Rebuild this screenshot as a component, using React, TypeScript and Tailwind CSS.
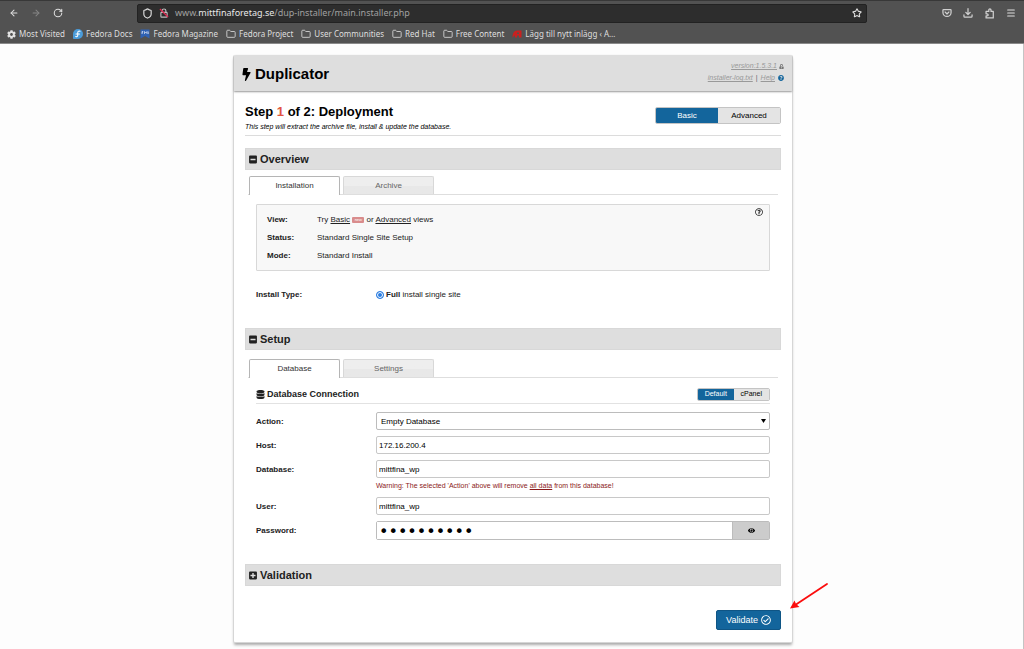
import { useState } from "react";
import type { ReactNode } from "react";
import { ArrowLeft, ArrowRight, Folder, Menu, RotateCw, Shield, Star } from "lucide-react";
import {
  FaBolt,
  FaCog,
  FaDatabase,
  FaEye,
  FaMinusSquare,
  FaPlusSquare,
  FaQuestionCircle,
  FaRegCheckCircle,
  FaRegQuestionCircle,
  FaUnlockAlt,
} from "react-icons/fa";

function InsecureLock() {
  return (
    <svg viewBox="0 0 16 16" className="size-[10px]" fill="none" stroke="#bdbdbd" strokeWidth="1.8">
      <rect x="3" y="7" width="10" height="7.5" rx="1" />
      <path d="M5 7V4.5a3 3 0 0 1 6 0V7" />
      <path d="M1.5 1.5l13 13" stroke="#e22850" strokeWidth="2" />
    </svg>
  );
}

function PocketIcon() {
  return (
    <svg viewBox="0 0 16 16" className="size-[10px]" fill="none" stroke="#d0d0d0" strokeWidth="2" strokeLinecap="round" strokeLinejoin="round">
      <path d="M2.5 2.5h11a1 1 0 0 1 1 1V7a6.5 6.5 0 0 1-13 0V3.5a1 1 0 0 1 1-1z" />
      <path d="M5 6.5l3 3 3-3" />
    </svg>
  );
}

function DownloadIcon() {
  return (
    <svg viewBox="0 0 16 16" className="size-[10px]" fill="none" stroke="#d0d0d0" strokeWidth="2" strokeLinecap="round" strokeLinejoin="round">
      <path d="M8 1v9M4.5 7L8 10.4 11.5 7M1.5 11v2a1.5 1.5 0 0 0 1.5 1.5h10a1.5 1.5 0 0 0 1.5-1.5v-2" />
    </svg>
  );
}

function ExtensionIcon() {
  return (
    <svg viewBox="0 0 16 16" className="size-[11px]" fill="none" stroke="#d0d0d0" strokeWidth="1.8" strokeLinejoin="round">
      <path d="M3 14.5V11.5h1.5a1.5 1.5 0 0 0 0-3H3V5h4V3a1.6 1.6 0 0 1 3.200 0v2H13.5v9.5z" />
    </svg>
  );
}

function FedoraIcon() {
  return (
    <svg viewBox="0 0 20 20" className="size-[10px]">
      <path d="M10 0a10 10 0 1 1 0 20H1.5A1.5 1.5 0 0 1 0 18.5V10A10 10 0 0 1 10 0z" fill="#4a9bd9" />
      <path d="M14 4.5c-3-1-4.5.8-4.5 3v5c0 2.5-2 3.5-4 2.5M6 10h7" fill="none" stroke="#fff" strokeWidth="2.2" strokeLinecap="round" />
    </svg>
  );
}

function MagazineIcon() {
  return (
    <svg viewBox="0 0 20 20" className="size-[10px]">
      <path d="M1 1h18v18l-9-5-9 5z" fill="#2f62b5" />
      <path d="M4 10V5h2.5M4 7.5h2M9 10V5l2.500 3L14 5v5M16.5 5v5" fill="none" stroke="#dfe8f7" strokeWidth="1.4" />
    </svg>
  );
}

function RedAIcon() {
  return (
    <svg viewBox="0 0 20 20" className="size-[10px]">
      <path d="M1 17c0-8 3-14 9-14h9v14h-5v-4h-4v4H6v-5z" fill="#c9201f" />
      <path d="M10 10V7h4v3z" fill="#525252" />
    </svg>
  );
}

const folder = <Folder size={10} strokeWidth={2.2} color="#d0d0d0" />;

const bookmarks: { label: string; icon: ReactNode }[] = [
  { label: "Most Visited", icon: <FaCog size={9} color="#e2e2e2" /> },
  { label: "Fedora Docs", icon: <FedoraIcon /> },
  { label: "Fedora Magazine", icon: <MagazineIcon /> },
  { label: "Fedora Project", icon: folder },
  { label: "User Communities", icon: folder },
  { label: "Red Hat", icon: folder },
  { label: "Free Content", icon: folder },
  { label: "Lägg till nytt inlägg ‹ A…", icon: <RedAIcon /> },
];

function BrowserChrome() {
  return (
    <header className="border-b border-[#8a8a8a] bg-[#525252] font-['Noto_Sans','Open_Sans',sans-serif] text-[8px] text-[#dedede]">
      <div className="flex h-[25px] items-center border-t border-[#383838]">
        <div className="flex w-[137px] items-center gap-3 pl-[9px]">
          <button type="button" aria-label="Back">
            <ArrowLeft size={10} strokeWidth={2.5} />
          </button>
          <button type="button" aria-label="Forward" className="text-[#858585]">
            <ArrowRight size={10} strokeWidth={2.5} />
          </button>
          <button type="button" aria-label="Reload">
            <RotateCw size={10} strokeWidth={2.5} />
          </button>
        </div>
        <div className="flex h-[19px] max-w-[730px] flex-1 items-center rounded-xs border border-[#222] bg-[#2d2d2d] pl-1">
          <Shield size={11} strokeWidth={2.5} />
          <span className="ml-[6px]">
            <InsecureLock />
          </span>
          <p className="ml-[6px] flex-1 text-[9px] text-[#a0a0a0]">
            www.<span className="text-[#e8e8e8]">mittfinaforetag.se</span>/dup-installer/main.installer.php
          </p>
          <button type="button" aria-label="Bookmark this page" className="mr-1">
            <Star size={10} strokeWidth={2.5} />
          </button>
        </div>
        <div className="ml-auto flex items-center gap-[11px] pr-2">
          <button type="button" aria-label="Save to Pocket">
            <PocketIcon />
          </button>
          <button type="button" aria-label="Downloads">
            <DownloadIcon />
          </button>
          <button type="button" aria-label="Extensions">
            <ExtensionIcon />
          </button>
          <button type="button" aria-label="Menu">
            <Menu size={10} strokeWidth={2.5} />
          </button>
        </div>
      </div>
      <nav aria-label="Bookmarks" className="flex h-[18px] items-center gap-2 pl-[7px]">
        {bookmarks.map((b) => (
          <a key={b.label} href="#" className="flex items-center gap-[3px] whitespace-nowrap">
            {b.icon}
            {b.label}
          </a>
        ))}
      </nav>
    </header>
  );
}

function SectionBar({ title, open, className }: { title: string; open: boolean; className: string }) {
  return (
    <h2 className={className}>
      <button
        type="button"
        aria-expanded={open}
        className="flex h-[22px] w-full items-center gap-[3px] border border-[#d8d8d8] bg-[#dedede] pl-[3px] text-[11px] font-bold text-[#222]"
      >
        {open ? <FaMinusSquare size={9} className="w-2" /> : <FaPlusSquare size={9} className="w-2" />}
        {title}
      </button>
    </h2>
  );
}

function Tabs({ labels, className }: { labels: [string, string]; className: string }) {
  return (
    <div className={className}>
      <div role="tablist" className="mx-[3px] flex h-[19px] gap-[3px] border-b border-[#dedede] pl-px">
        <button
          type="button"
          role="tab"
          aria-selected="true"
          className="-mb-px w-[91px] rounded-t-xs border border-b-0 border-[#b5b5b5] bg-white text-[#333]"
        >
          {labels[0]}
        </button>
        <button
          type="button"
          role="tab"
          aria-selected="false"
          className="w-[91px] rounded-t-xs border border-b-0 border-[#d8d8d8] bg-linear-to-b from-[#eeeeee] from-50% to-[#e8e8e8] to-50% text-[#666]"
        >
          {labels[1]}
        </button>
      </div>
    </div>
  );
}

function Row({ label, id, children }: { label: string; id: string; children: ReactNode }) {
  return (
    <div className="flex">
      <label htmlFor={id} className="mt-px w-[120px] shrink-0 font-bold leading-[17px]">
        {label}
      </label>
      <div className="min-w-0 flex-1">{children}</div>
    </div>
  );
}

const fieldClass = "block h-[18px] w-full rounded-xs border border-[#c8c8c8] bg-white px-0.5 text-[8px] text-black";

export default function App() {
  const [database, setDatabase] = useState("mittfina_wp");
  const [user, setUser] = useState("mittfina_wp");
  const [host, setHost] = useState("172.16.200.4");
  const [password, setPassword] = useState("abcdefghij");

  return (
    <div className="flex min-h-screen flex-col bg-[#fdfdfd] font-['Liberation_Sans',Arial,sans-serif] text-[8px] text-[#222]">
      <BrowserChrome />
      <main className="flex-1 border-r border-[#c4c4c4] pb-[7px] pl-[3px] pt-[11px]">
        <div className="relative mx-auto max-w-[560px] rounded-xs border-x border-b border-[#d6d6d6] bg-white shadow-[0_3px_3px_-1px_#aaaaaa]">
          <div className="flex h-9 items-center justify-between rounded-t-xs bg-[#dedede] px-2 shadow-[0_1px_2px_#999999]">
            <h1 className="flex items-center gap-1 pt-[3px] text-[15px] font-bold text-black">
              <FaBolt size={13} className="w-[9px]" />
              Duplicator
            </h1>
            <div className="flex flex-col items-end pb-0.5 text-[7px] leading-3 text-[#999]">
              <span className="flex items-center gap-0.5">
                <a href="#" className="italic underline">
                  version:1.5.3.1
                </a>
                <FaUnlockAlt size={5} color="#777" />
              </span>
              <span className="flex items-center gap-[3px]">
                <a href="#" className="italic underline">
                  installer-log.txt
                </a>
                <span className="text-[#666]">|</span>
                <a href="#" className="italic underline">
                  Help
                </a>
                <FaQuestionCircle size={6} color="#13659c" />
              </span>
            </div>
          </div>

          <div className="px-[11px] pb-3 pt-[13px]">
            <div className="flex justify-between border-b border-[#dcdcdc] pb-1">
              <div>
                <h2 className="text-[13px] font-bold leading-4 text-black">
                  Step <span className="text-[#e25440]">1</span> of 2: Deployment
                </h2>
                <p className="mt-[3px] text-[7px] italic leading-2 text-black">
                  This step will extract the archive file, install &amp; update the database.
                </p>
              </div>
              <div className="mt-[3px] flex h-[17px] w-[126px] overflow-hidden rounded-xs border border-[#c4c4c4] text-black">
                <button type="button" className="flex-1 bg-[#13659c] text-white">
                  Basic
                </button>
                <button type="button" className="flex-1 bg-[#e4e4e4]">
                  Advanced
                </button>
              </div>
            </div>

            <SectionBar title="Overview" open className="mt-3" />
            <Tabs labels={["Installation", "Archive"]} className="mt-[6px]" />

            <div className="mx-[11px]">
              <div className="mt-[9px] flex justify-between rounded-[1px] border border-[#d8d8d8] bg-[#f8f8f8] pb-[5px] pl-[10px] pr-[6px] pt-[6px]">
                <dl className="grid grid-cols-[50px_auto] leading-[18px]">
                  <dt className="font-bold">View:</dt>
                  <dd>
                    Try{" "}
                    <a href="#" className="underline">
                      Basic
                    </a>{" "}
                    <span className="inline-block h-[6px] w-3 rounded-[1px] bg-[#d98c8c] text-center align-[1px] text-[4px] leading-[6px] text-white">
                      new
                    </span>{" "}
                    or{" "}
                    <a href="#" className="underline">
                      Advanced
                    </a>{" "}
                    views
                  </dd>
                  <dt className="font-bold">Status:</dt>
                  <dd>Standard Single Site Setup</dd>
                  <dt className="font-bold">Mode:</dt>
                  <dd>Standard Install</dd>
                </dl>
                <button type="button" aria-label="Help" className="-mt-[3px] self-start">
                  <FaRegQuestionCircle size={8} />
                </button>
              </div>

              <div className="mt-4 flex leading-4">
                <span className="w-[120px] font-bold">Install Type:</span>
                <label className="flex items-center gap-0.5">
                  <input
                    type="radio"
                    name="install-type"
                    defaultChecked
                    className="size-2 appearance-none rounded-full border border-[#2a7de1] bg-[#2a7de1] shadow-[inset_0_0_0_1px_white]"
                  />
                  <span>
                    <b>Full</b> install single site
                  </span>
                </label>
              </div>
            </div>

            <SectionBar title="Setup" open className="mt-[25px]" />
            <Tabs labels={["Database", "Settings"]} className="mt-[9px]" />

            <div className="mx-[11px]">
              <div className="mt-[10px] flex items-start justify-between border-b border-[#e2e2e2] pb-0.5">
                <h3 className="flex items-center gap-0.5 text-[9px] font-bold leading-3">
                  <FaDatabase size={9} className="w-[9px]" />
                  Database Connection
                </h3>
                <div className="flex h-[13px] w-[73px] overflow-hidden rounded-xs border border-[#c4c4c4] text-[7px] text-black">
                  <button type="button" className="flex-1 bg-[#13659c] text-white">
                    Default
                  </button>
                  <button type="button" className="flex-1 bg-[#e4e4e4]">
                    cPanel
                  </button>
                </div>
              </div>

              <div className="mt-2 flex flex-col gap-[6px]">
                <Row label="Action:" id="action">
                  <div className="relative">
                    <select
                      id="action"
                      className="block h-[18px] w-full appearance-none rounded-xs border border-[#bcbcbc] bg-white px-1 pt-px text-[8px] text-black"
                    >
                      <option>Empty Database</option>
                    </select>
                    <svg viewBox="0 0 10 8" className="pointer-events-none absolute right-1 top-[7px] h-1 w-[5px]">
                      <path d="M0 0h10L5 8z" />
                    </svg>
                  </div>
                </Row>
                <Row label="Host:" id="host">
                  <input id="host" type="text" value={host} onChange={(e) => setHost(e.target.value)} className={fieldClass} />
                </Row>
                <Row label="Database:" id="database">
                  <input
                    id="database"
                    type="text"
                    value={database}
                    onChange={(e) => setDatabase(e.target.value)}
                    className={fieldClass}
                  />
                  <p className="mb-px mt-1 text-[7px] leading-2 text-[#8b1a1a]">
                    Warning: The selected 'Action' above will remove <u>all data</u> from this database!
                  </p>
                </Row>
                <Row label="User:" id="user">
                  <input id="user" type="text" value={user} onChange={(e) => setUser(e.target.value)} className={fieldClass} />
                </Row>
                <Row label="Password:" id="password">
                  <div className="flex h-[19px] rounded-xs border border-[#bcbcbc]">
                    <input
                      id="password"
                      type="password"
                      value={password}
                      onChange={(e) => setPassword(e.target.value)}
                      className="min-w-0 flex-1 bg-white px-0.5 pt-px font-['DejaVu_Sans',sans-serif] text-[16px] leading-4 text-black"
                    />
                    <button
                      type="button"
                      aria-label="Show password"
                      className="flex w-[37px] items-center justify-center border-l border-[#bcbcbc] bg-[#cccccc] text-black"
                    >
                      <FaEye size={7} />
                    </button>
                  </div>
                </Row>
              </div>
            </div>

            <SectionBar title="Validation" open={false} className="mt-6" />

            <div className="mt-6 flex justify-end">
              <button
                type="button"
                className="flex h-5 w-[65px] items-center justify-center gap-[3px] rounded-xs border border-[#0f5585] bg-[#13659c] text-[9px] text-white"
              >
                <span className="pt-px">Validate</span>
                <FaRegCheckCircle size={10} />
              </button>
            </div>
          </div>

          <svg viewBox="0 0 38 26" className="absolute -right-9 bottom-[33px] h-[26px] w-[38px]">
            <path d="M37 1L6 21.5" stroke="#fb0d0d" strokeWidth="1.8" strokeLinecap="round" />
            <path d="M0 25.5l4.5-8 1.500 3.500 3.500 3z" fill="#fb0d0d" />
          </svg>
        </div>
      </main>
    </div>
  );
}
